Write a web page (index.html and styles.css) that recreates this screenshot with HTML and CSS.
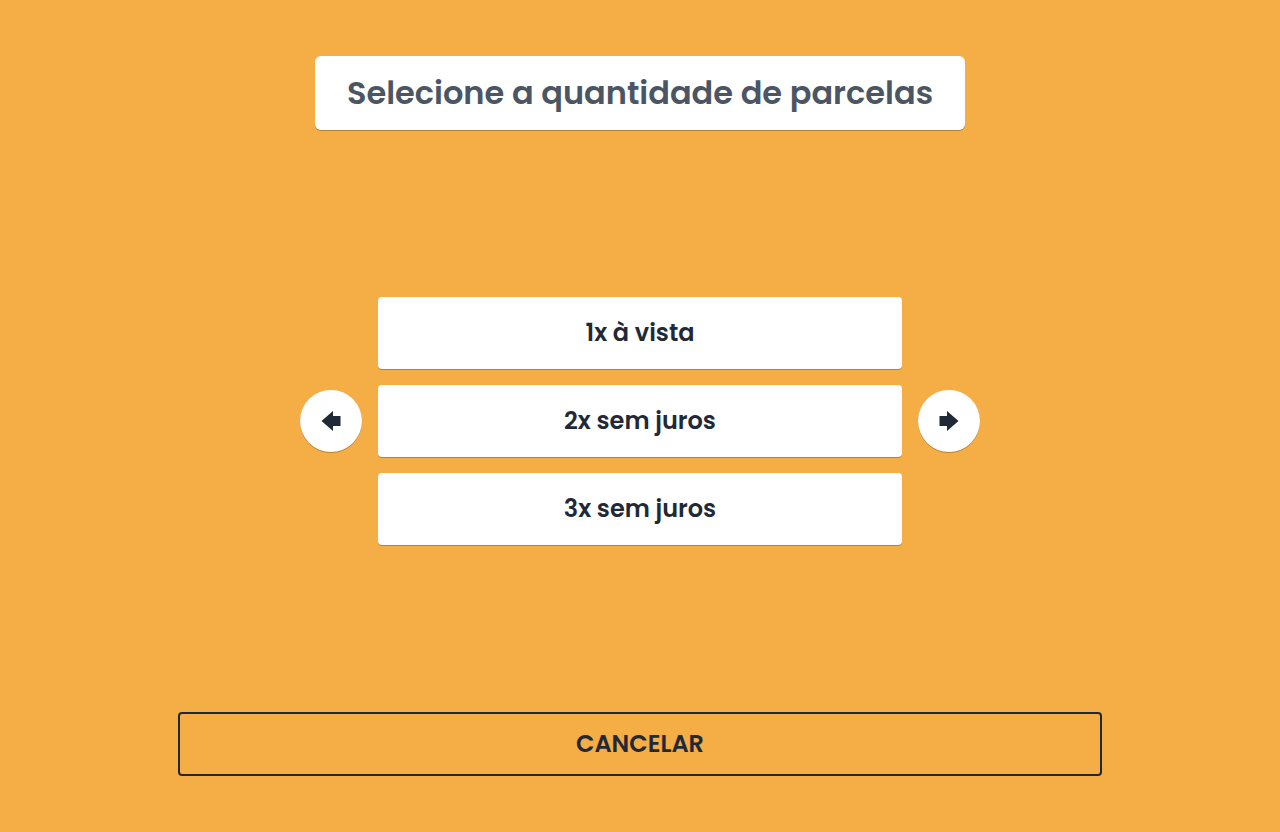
FILE: index.html
```html
<!DOCTYPE html>
<html lang="pt-BR">
<head>
  <meta charset="UTF-8">
  <meta name="viewport" content="width=device-width, initial-scale=1.0">
  <title>Parcelas</title>
  <link rel="stylesheet" href="styles.css">
</head>
<body>

  <main class="page">
    <h1 class="title">Selecione a quantidade de parcelas</h1>

    <div class="selector">
      <button type="button" class="arrow" aria-label="Anterior">
        <svg width="20" height="20" viewBox="0 0 20 20" fill="currentColor">
          <path d="M0.5 10 L12 0 V5 H19.5 V15 H12 V20 Z"/>
        </svg>
      </button>

      <div class="options">
        <button type="button" class="option">1x à vista</button>
        <button type="button" class="option">2x sem juros</button>
        <button type="button" class="option">3x sem juros</button>
      </div>

      <button type="button" class="arrow" aria-label="Próximo">
        <svg width="20" height="20" viewBox="0 0 20 20" fill="currentColor">
          <path d="M19.5 10 L8 0 V5 H0.5 V15 H8 V20 Z"/>
        </svg>
      </button>
    </div>

    <button type="button" class="cancel">CANCELAR</button>
  </main>

</body>
</html>
```

FILE: styles.css
```css
* {
  box-sizing: border-box;
}

body {
  margin: 0;
  background-color: #f5ad45;
  color: #1f2937;
  font-family: Poppins, Inter, sans-serif;
}

button {
  padding: 0;
  border: none;
  color: inherit;
  font-family: inherit;
  font-size: 24px;
  font-weight: 600;
  line-height: 32px;
  cursor: pointer;
}

.page {
  min-height: 100vh;
  padding: 56px 16px;
  display: flex;
  flex-direction: column;
  justify-content: space-between;
  align-items: center;
}

.title {
  margin: 0;
  padding: 16px 32px;
  border-radius: 6px;
  background-color: #fff;
  box-shadow: 0 1px 0 rgba(0, 0, 0, 0.25);
  color: #4b5563;
  font-size: 32px;
  font-weight: 600;
  line-height: 42px;
  text-align: center;
}

.selector {
  width: 100%;
  max-width: 680px;
  display: flex;
  align-items: center;
  gap: 16px;
}

.options {
  flex: 1;
  display: flex;
  flex-direction: column;
  gap: 16px;
}

.option {
  height: 72px;
  border-radius: 4px;
  background-color: #fff;
  box-shadow: 0 1px 0 rgba(0, 0, 0, 0.25);
}

.arrow {
  flex-shrink: 0;
  width: 62px;
  height: 62px;
  display: flex;
  justify-content: center;
  align-items: center;
  border-radius: 50%;
  background-color: #fff;
  box-shadow: 0 1px 0 rgba(0, 0, 0, 0.25);
}

.cancel {
  width: 100%;
  max-width: 924px;
  height: 64px;
  border: 2px solid #1f2937;
  border-radius: 4px;
  background-color: transparent;
}
```
